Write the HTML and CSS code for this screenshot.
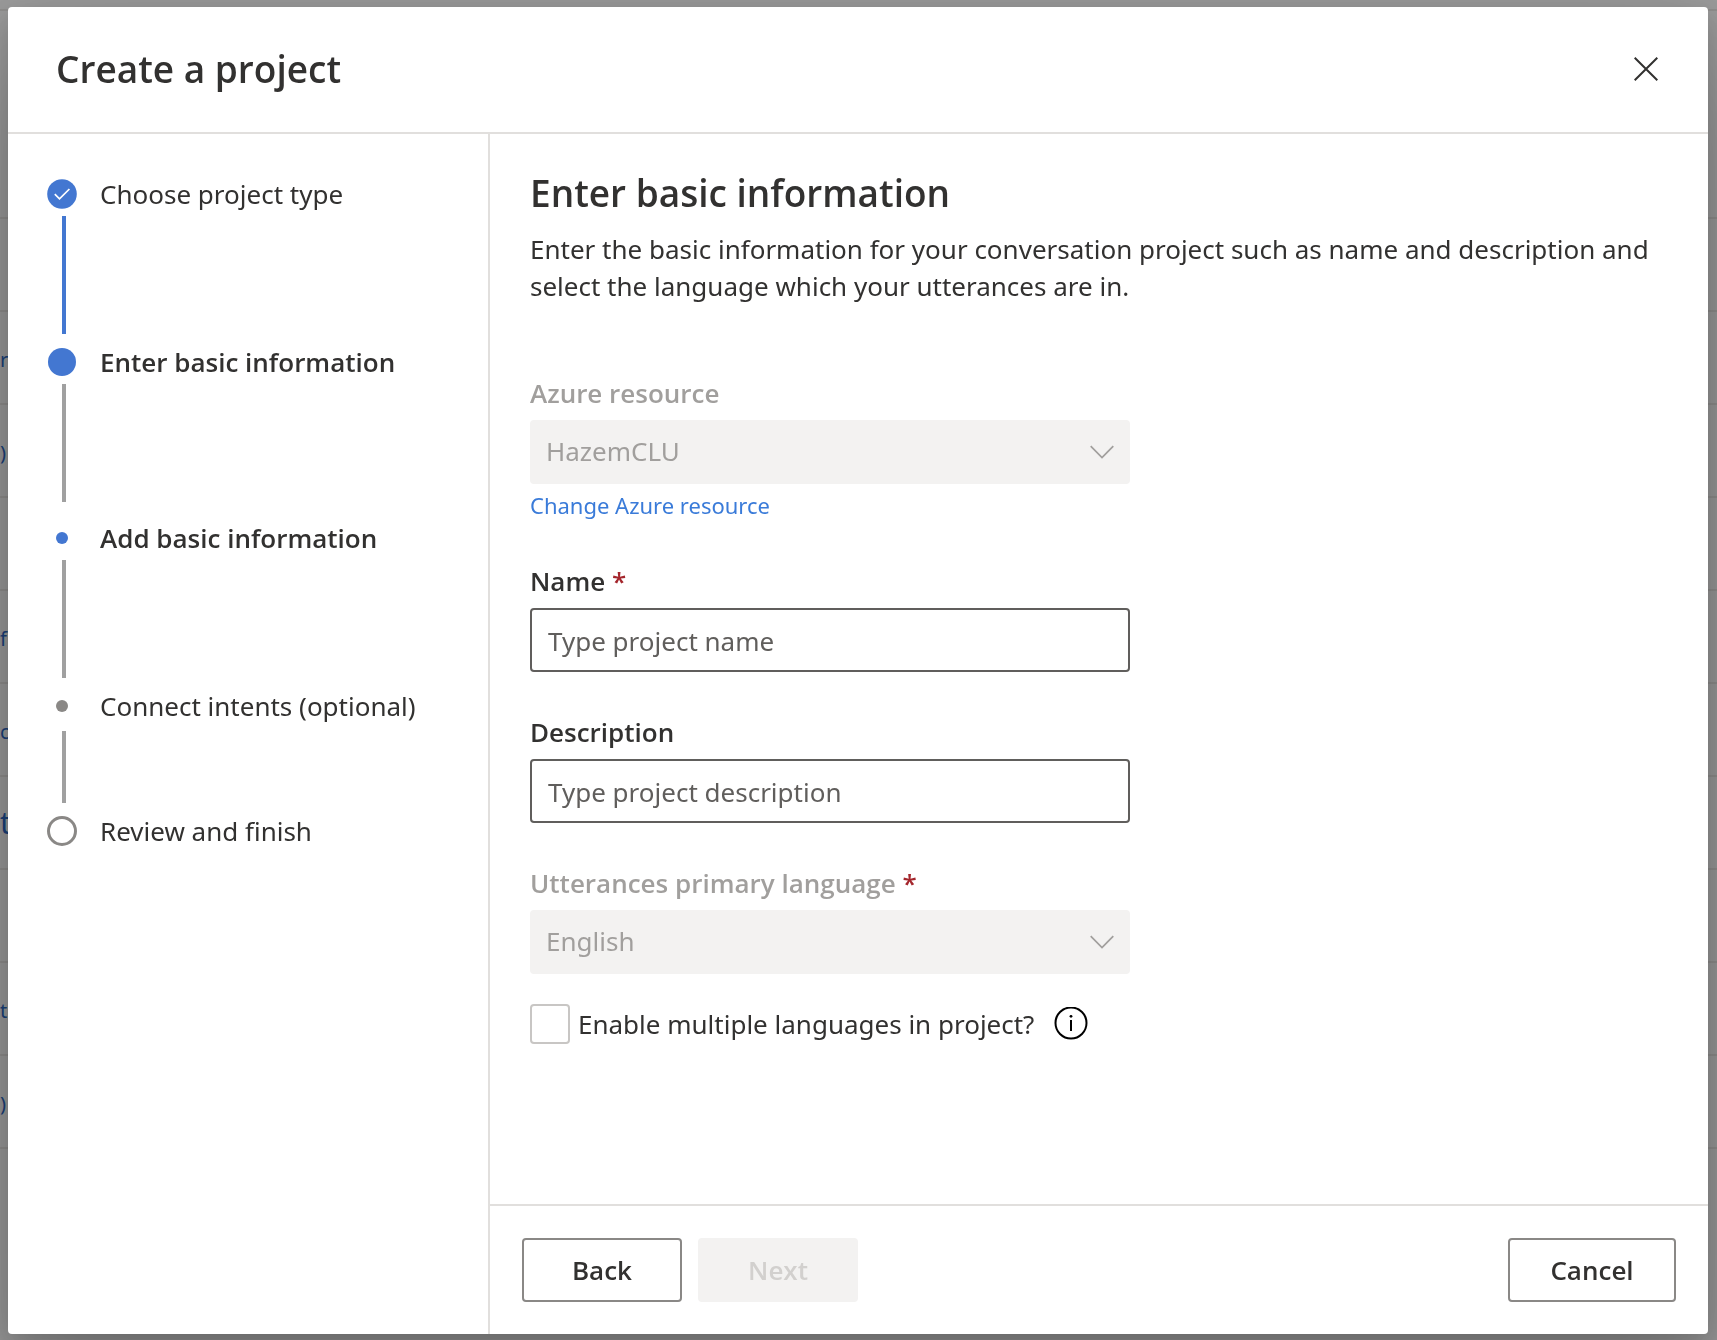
FILE: index.html
```html
<!DOCTYPE html>
<html lang="en">
<head>
<meta charset="utf-8">
<meta name="viewport" content="width=device-width, initial-scale=1">
<title>Create a project</title>
<link rel="stylesheet" href="styles.css">
</head>
<body>
<div class="backdrop-page" aria-hidden="true">
  <div class="row row-top"></div>
  <div class="row row-head"></div>
  <div class="row"></div>
  <div class="row"><span>r</span></div>
  <div class="row"><span>)</span></div>
  <div class="row"></div>
  <div class="row"><span>fl</span></div>
  <div class="row"><span>c</span></div>
  <div class="row row-large"><span>ti</span></div>
  <div class="row"></div>
  <div class="row"><span>ti</span></div>
  <div class="row"><span>)</span></div>
</div>

<div class="overlay">
  <div class="dialog" role="dialog" aria-modal="true" aria-labelledby="dialog-title">
    <header class="dialog-header">
      <h1 id="dialog-title" class="title">Create a project</h1>
      <button class="close" type="button" aria-label="Close">
        <svg width="24" height="24" viewBox="0 0 24 24" fill="none" stroke="#323130" stroke-width="2"><path d="M.7.7l22.600 22.600M23.300.7L.7 23.300"/></svg>
      </button>
    </header>
    <div class="dialog-body">
      <nav class="sidebar" aria-label="Steps">
        <ol class="steps">
          <li class="step">
            <div class="step-row">
              <span class="marker"><svg width="30" height="30" viewBox="0 0 30 30" fill="none"><circle cx="15" cy="15" r="14.800" fill="#4377d1"/><path d="M7.800 15.200l4.700 4.700L22.400 10" stroke="#fff" stroke-width="1.700"/></svg></span>
              <span>Choose project type</span>
            </div>
            <div class="line line-done"></div>
          </li>
          <li class="step">
            <div class="step-row step-current">
              <span class="marker"><span class="dot dot-current"></span></span>
              <span>Enter basic information</span>
            </div>
            <div class="line"></div>
          </li>
          <li class="step step-sub">
            <div class="step-row step-current">
              <span class="marker"><span class="dot dot-sub"></span></span>
              <span>Add basic information</span>
            </div>
            <div class="line"></div>
          </li>
          <li class="step">
            <div class="step-row">
              <span class="marker"><span class="dot dot-next"></span></span>
              <span>Connect intents (optional)</span>
            </div>
            <div class="line line-short"></div>
          </li>
          <li class="step">
            <div class="step-row">
              <span class="marker"><span class="dot dot-last"></span></span>
              <span>Review and finish</span>
            </div>
          </li>
        </ol>
      </nav>
      <form class="main">
        <div class="content">
          <h2 class="title">Enter basic information</h2>
          <p class="intro">Enter the basic information for your conversation project such as name and description and select the language which your utterances are in.</p>
          <div class="fields">
            <div class="field field-disabled">
              <label for="resource">Azure resource</label>
              <div class="select-wrap">
                <select id="resource" class="control" disabled><option>HazemCLU</option></select>
                <svg class="chevron" width="24" height="14" viewBox="0 0 24 14" fill="none" stroke="#a19f9d" stroke-width="1.700"><path d="M.7 1.200L12 12.500 23.300 1.200"/></svg>
              </div>
              <a class="link" href="#resource">Change Azure resource</a>
            </div>
            <div class="field">
              <label for="name">Name <span class="required">*</span></label>
              <input id="name" class="control" type="text" placeholder="Type project name" required>
            </div>
            <div class="field">
              <label for="description">Description</label>
              <input id="description" class="control" type="text" placeholder="Type project description">
            </div>
            <div class="field field-disabled">
              <label for="language">Utterances primary language <span class="required">*</span></label>
              <div class="select-wrap">
                <select id="language" class="control" disabled><option>English</option></select>
                <svg class="chevron" width="24" height="14" viewBox="0 0 24 14" fill="none" stroke="#a19f9d" stroke-width="1.700"><path d="M.7 1.200L12 12.500 23.300 1.200"/></svg>
              </div>
            </div>
          </div>
          <div class="check-row">
            <input id="multi" class="checkbox" type="checkbox">
            <label for="multi">Enable multiple languages in project?</label>
            <button class="info" type="button" aria-label="More information">
              <svg width="34" height="34" viewBox="0 0 34 34" fill="none"><circle cx="17" cy="16" r="15.500" stroke="#000" stroke-width="2"/><path d="M17 13v11" stroke="#000" stroke-width="2"/><circle cx="17" cy="9.300" r="1.400" fill="#000"/></svg>
            </button>
          </div>
        </div>
        <footer class="dialog-footer">
          <button class="button" type="button">Back</button>
          <button class="button" type="submit" disabled>Next</button>
          <button class="button button-cancel" type="button">Cancel</button>
        </footer>
      </form>
    </div>
  </div>
</div>
</body>
</html>
```
FILE: styles.css
```css
*,
*::before,
*::after {
  box-sizing: border-box;
}

body {
  margin: 0;
  color: #323130;
  font: 26px/37px "Noto Sans", "Segoe UI", sans-serif;
  background: #fff;
}

button,
input,
select {
  font: inherit;
  color: inherit;
}

h1,
h2,
p,
ol {
  margin: 0;
  padding: 0;
}

.title,
.step-current,
.field label,
.button {
  font-family: "Open Sans", "Segoe UI", sans-serif;
  font-weight: 600;
}

/* Page behind the dialog */
.backdrop-page {
  height: 100vh;
  overflow: hidden;
}

.row {
  display: flex;
  align-items: center;
  height: 93px;
  padding-top: 4px;
  border-bottom: 2px solid #edebe9;
  color: #2c6ac8;
  font-size: 20px;
}

.row-top {
  height: 11px;
}

.row-head {
  height: 208px;
}

.row-large {
  padding-top: 0;
  font-size: 30px;
}

.overlay {
  position: fixed;
  inset: 0;
  display: flex;
  padding: 7px 9px 6px 8px;
  background: rgba(0, 0, 0, 0.4);
}

.dialog {
  flex: 1;
  display: flex;
  flex-direction: column;
  min-width: 0;
  overflow: auto;
  background: #fff;
  border-radius: 4px;
  box-shadow: 0 51px 115px rgba(0, 0, 0, 0.22), 0 10px 29px rgba(0, 0, 0, 0.18);
}

.title {
  font-size: 37px;
  line-height: 54px;
}

.dialog-header {
  display: flex;
  align-items: center;
  justify-content: space-between;
  height: 127px;
  padding: 0 38px 2px 48px;
  border-bottom: 2px solid #e1dfdd;
}

.close {
  display: flex;
  padding: 12px;
  border: 0;
  background: none;
}

.dialog-body {
  flex: 1;
  display: flex;
}

/* Steps */
.sidebar {
  flex: none;
  width: 482px;
  padding: 38px 20px 20px 39px;
  border-right: 2px solid #e1dfdd;
}

.steps {
  display: flex;
  flex-direction: column;
  gap: 6px;
  list-style: none;
}

.step-sub {
  padding-top: 8px;
}

.step-row {
  display: flex;
  align-items: center;
  gap: 23px;
  height: 44px;
}

.marker {
  display: flex;
  align-items: center;
  justify-content: center;
  width: 30px;
  height: 30px;
}

.dot {
  width: 12px;
  height: 12px;
  border-radius: 50%;
  background: #4377d1;
}

.dot-current {
  width: 28px;
  height: 28px;
}

.dot-next {
  background: #8a8886;
}

.dot-last {
  width: 30px;
  height: 30px;
  border: 3px solid #8a8886;
  background: none;
}

.line {
  width: 4px;
  height: 118px;
  margin-left: 15px;
  background: #a0a0a0;
}

.line-done {
  background: #4377d1;
}

.line-short {
  height: 72px;
  margin-top: 3px;
}

/* Form */
.main {
  flex: 1;
  display: flex;
  flex-direction: column;
  min-width: 0;
}

.content {
  flex: 1;
  padding: 32px 40px;
}

.intro {
  margin: 11px 0 70px;
}

.fields {
  display: flex;
  flex-direction: column;
  gap: 42px;
  max-width: 600px;
}

.field {
  display: flex;
  flex-direction: column;
}

.field label {
  margin-bottom: 8px;
}

.field-disabled label {
  color: #a19f9d;
}

.required {
  color: #a4262c;
}

.select-wrap {
  position: relative;
}

.control {
  width: 100%;
  height: 64px;
  padding: 2px 16px 0;
  border: 2px solid #605e5c;
  border-radius: 4px;
  background: #fff;
}

.control::placeholder {
  color: #605e5c;
  opacity: 1;
}

.control:disabled {
  appearance: none;
  padding: 0 14px 2px;
  border-color: #f3f2f1;
  background: #f3f2f1;
  color: #a19f9d;
  opacity: 1;
}

.chevron {
  position: absolute;
  top: 25px;
  right: 16px;
  pointer-events: none;
}

.link {
  align-self: flex-start;
  margin-top: 5px;
  color: #3a7bd9;
  font-size: 22px;
  line-height: 32px;
  text-decoration: none;
}

.check-row {
  display: flex;
  align-items: center;
  margin-top: 30px;
}

.checkbox {
  appearance: none;
  width: 40px;
  height: 40px;
  margin: 0 8px 0 0;
  border: 2px solid #c8c6c4;
  border-radius: 4px;
}

.info {
  display: flex;
  margin-left: 20px;
  padding: 0;
  border: 0;
  background: none;
}

.dialog-footer {
  display: flex;
  gap: 16px;
  padding: 32px;
  border-top: 2px solid #e1dfdd;
}

.button {
  min-width: 160px;
  height: 64px;
  padding: 0 40px;
  border: 2px solid #8a8886;
  border-radius: 4px;
  background: #fff;
}

.button:disabled {
  border-color: #f3f2f1;
  background: #f3f2f1;
  color: #d2d0ce;
}

.button-cancel {
  min-width: 168px;
  margin-left: auto;
}
```
